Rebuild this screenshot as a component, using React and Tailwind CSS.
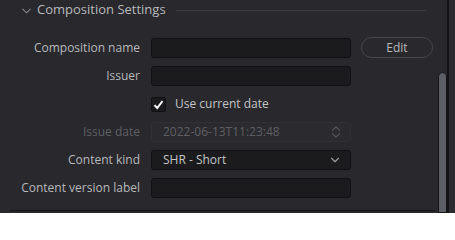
import { ChevronDown } from "lucide-react";

const Row = ({ label, dim, children }) => (
  <div className="flex h-5 items-center">
    <div
      className={`w-[140px] text-right text-[12px] ${dim ? "text-[#5f5f63]" : "text-[#b9b9bc]"}`}
    >
      {label}
    </div>
    <div className="ml-[11px] flex items-center">{children}</div>
  </div>
);

const Field = ({ children, dim }) => (
  <div
    className={`flex h-5 w-[200px] items-center rounded-[3px] border pl-[11px] pr-[10px] text-[12px] ${
      dim ? "border-[#303035] bg-[#2a2a2f] text-[#5f5f63]" : "border-[#111113] bg-[#1b1b1d] text-[#c4c4c6]"
    }`}
  >
    {children}
  </div>
);

export default function App() {
  return (
    <div
      className="flex h-[213px] w-[455px] overflow-hidden bg-[#28282d]"
      style={{ fontFamily: '"Open Sans", "Noto Sans", sans-serif' }}
    >
      <div className="flex w-[437px] flex-col">
        <div className="flex h-5 items-center pl-[22px]">
          <svg width="9" height="6" viewBox="0 0 9 6" className="mr-[6px] mt-px">
            <path d="M0.5 0.8 L4.5 4.8 L8.5 0.8" fill="none" stroke="#8a8a8e" strokeWidth="1.1" />
          </svg>
          <span className="text-[13px] text-[#b9b9bc]">Composition Settings</span>
          <div className="ml-[10px] mr-[11px] h-px flex-1 bg-[#3e3e44]" />
        </div>

        <div className="mt-[17px] flex flex-col gap-2">
          <div className="flex items-center">
            <Row label="Composition name">
              <Field />
            </Row>
            <button className="ml-[10px] h-[21px] w-[72px] rounded-full border border-[#47474d] text-[12px] text-[#b9b9bc]">
              Edit
            </button>
          </div>
          <Row label="Issuer">
            <Field />
          </Row>
          <Row label="">
            <div className="flex items-center">
              <div className="mt-px flex h-[15px] w-[15px] items-center justify-center rounded-[2px] border border-[#111113] bg-[#1b1b1d]">
                <svg width="11" height="10" viewBox="0 0 11 10">
                  <path d="M1.5 5.2 L4.2 8 L9.5 1.2" fill="none" stroke="#ffffff" strokeWidth="1.9" />
                </svg>
              </div>
              <span className="ml-[9px] text-[12px] text-[#c4c4c6]">Use current date</span>
            </div>
          </Row>
          <Row label="Issue date" dim>
            <Field dim>
              <span className="flex-1">2022-06-13T11:23:48</span>
              <svg width="10" height="12" viewBox="0 0 10 12" className="mr-[-1px]">
                <path d="M1 4.5 L5 1 L9 4.5 M1 7.5 L5 11 L9 7.5" fill="none" stroke="#55555a" strokeWidth="1.2" />
              </svg>
            </Field>
          </Row>
          <Row label="Content kind">
            <Field>
              <span className="flex-1">SHR - Short</span>
              <ChevronDown size={14} strokeWidth={2} className="mr-[-2px] text-[#9a9a9e]" />
            </Field>
          </Row>
          <Row label="Content version label">
            <Field />
          </Row>
        </div>

        <div className="ml-[9px] mt-[12px] h-px w-[427px] bg-[#141416]" />
      </div>

      <div className="flex w-[10px] flex-col pl-px pt-[72px]">
        <div className="h-[200px] w-[9px] rounded-t-full border border-[#141416] bg-[#5c5f66]" />
      </div>
      <div className="w-[2px] bg-[#141416]" />
      <div className="flex-1 bg-[#2b2b30]" />
    </div>
  );
}
